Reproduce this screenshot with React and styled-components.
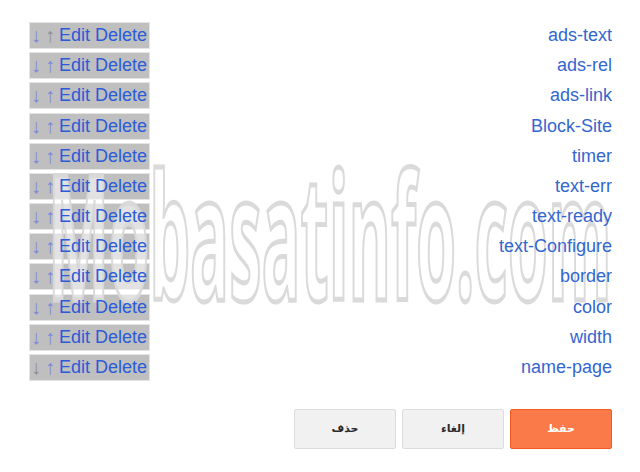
import React from 'react';
import styled, { createGlobalStyle } from 'styled-components';

const GlobalStyle = createGlobalStyle`
  html, body {
    margin: 0;
    padding: 0;
    background: #ffffff;
  }
  body {
    font-family: "Liberation Sans", Arial, sans-serif;
  }
`

const Page = styled.div`
  position: relative;
  width: 582px;
  padding: 23px 0 0 30px;
  overflow: hidden;
  height: 449px;
`

const List = styled.div`
  display: flex;
  flex-direction: column;
  gap: 5.18px;
`

const Row = styled.div`
  display: flex;
  justify-content: space-between;
  align-items: center;
  height: 25px;
`

const Tools = styled.div`
  display: flex;
  align-items: center;
  width: 119px;
  height: 25px;
  box-sizing: border-box;
  background: #bfbfbf;
  outline: 1px solid #e4e4e4;
  font-size: 18px;
  line-height: 25px;
  white-space: nowrap;
  padding-left: 1px;
`

const Arrow = styled.span`
  position: relative;
  z-index: 2;
  font-size: 20px;
  color: ${props => props.$off ? '#8e8e8e' : '#7e86dc'};
  margin-right: 4px;
`

const ToolLink = styled.a`
  position: relative;
  z-index: 2;
  color: #2b5bd8;
  text-decoration: none;
  margin-right: 5px;
  cursor: pointer;
  &:last-child {
    margin-right: 0;
  }
`

const Label = styled.a`
  position: relative;
  z-index: 2;
  color: #3366d0;
  font-size: 18px;
  line-height: 25px;
  text-decoration: none;
  cursor: pointer;
`

const Actions = styled.div`
  display: flex;
  justify-content: flex-end;
  gap: 6px;
  margin-top: 29px;
`

const Button = styled.button`
  width: 102px;
  height: 40px;
  border-radius: 2px;
  border: 1px solid ${props => props.$primary ? '#f35a1d' : '#dcdcdc'};
  background: ${props => props.$primary ? '#fb7a49' : '#f1f1f1'};
  color: ${props => props.$primary ? '#ffffff' : '#2b2b2b'};
  font-family: "DejaVu Sans", sans-serif;
  font-weight: bold;
  font-size: 11px;
  cursor: pointer;
`

const Watermark = styled.div`
  position: absolute;
  z-index: 1;
  left: 48px;
  top: 145px;
  font-family: "Open Sans", sans-serif;
  font-size: 175px;
  line-height: 1;
  font-weight: 700;
  white-space: nowrap;
  color: rgba(255, 255, 255, 0.55);
  -webkit-text-stroke: 5px rgba(216, 216, 216, 0.95);
  transform: scaleX(0.37);
  transform-origin: left top;
  pointer-events: none;
  user-select: none;
`

const items = [
  'ads-text', 'ads-rel', 'ads-link', 'Block-Site', 'timer', 'text-err',
  'text-ready', 'text-Configure', 'border', 'color', 'width', 'name-page',
]

const App = () => {
  return (
    <>
      <GlobalStyle />
      <Page>
        <List>
          {items.map((name, i) => (
            <Row key={name}>
              <Tools>
                <Arrow $off={i === items.length - 1}>↓</Arrow>
                <Arrow $off={i === 0}>↑</Arrow>
                <ToolLink>Edit</ToolLink>
                <ToolLink>Delete</ToolLink>
              </Tools>
              <Label>{name}</Label>
            </Row>
          ))}
        </List>

        <Actions>
          <Button>حذف</Button>
          <Button>إلغاء</Button>
          <Button $primary>حفظ</Button>
        </Actions>

        <Watermark>Mobasatinfo.com</Watermark>
      </Page>
    </>
  )
}

export default App;
